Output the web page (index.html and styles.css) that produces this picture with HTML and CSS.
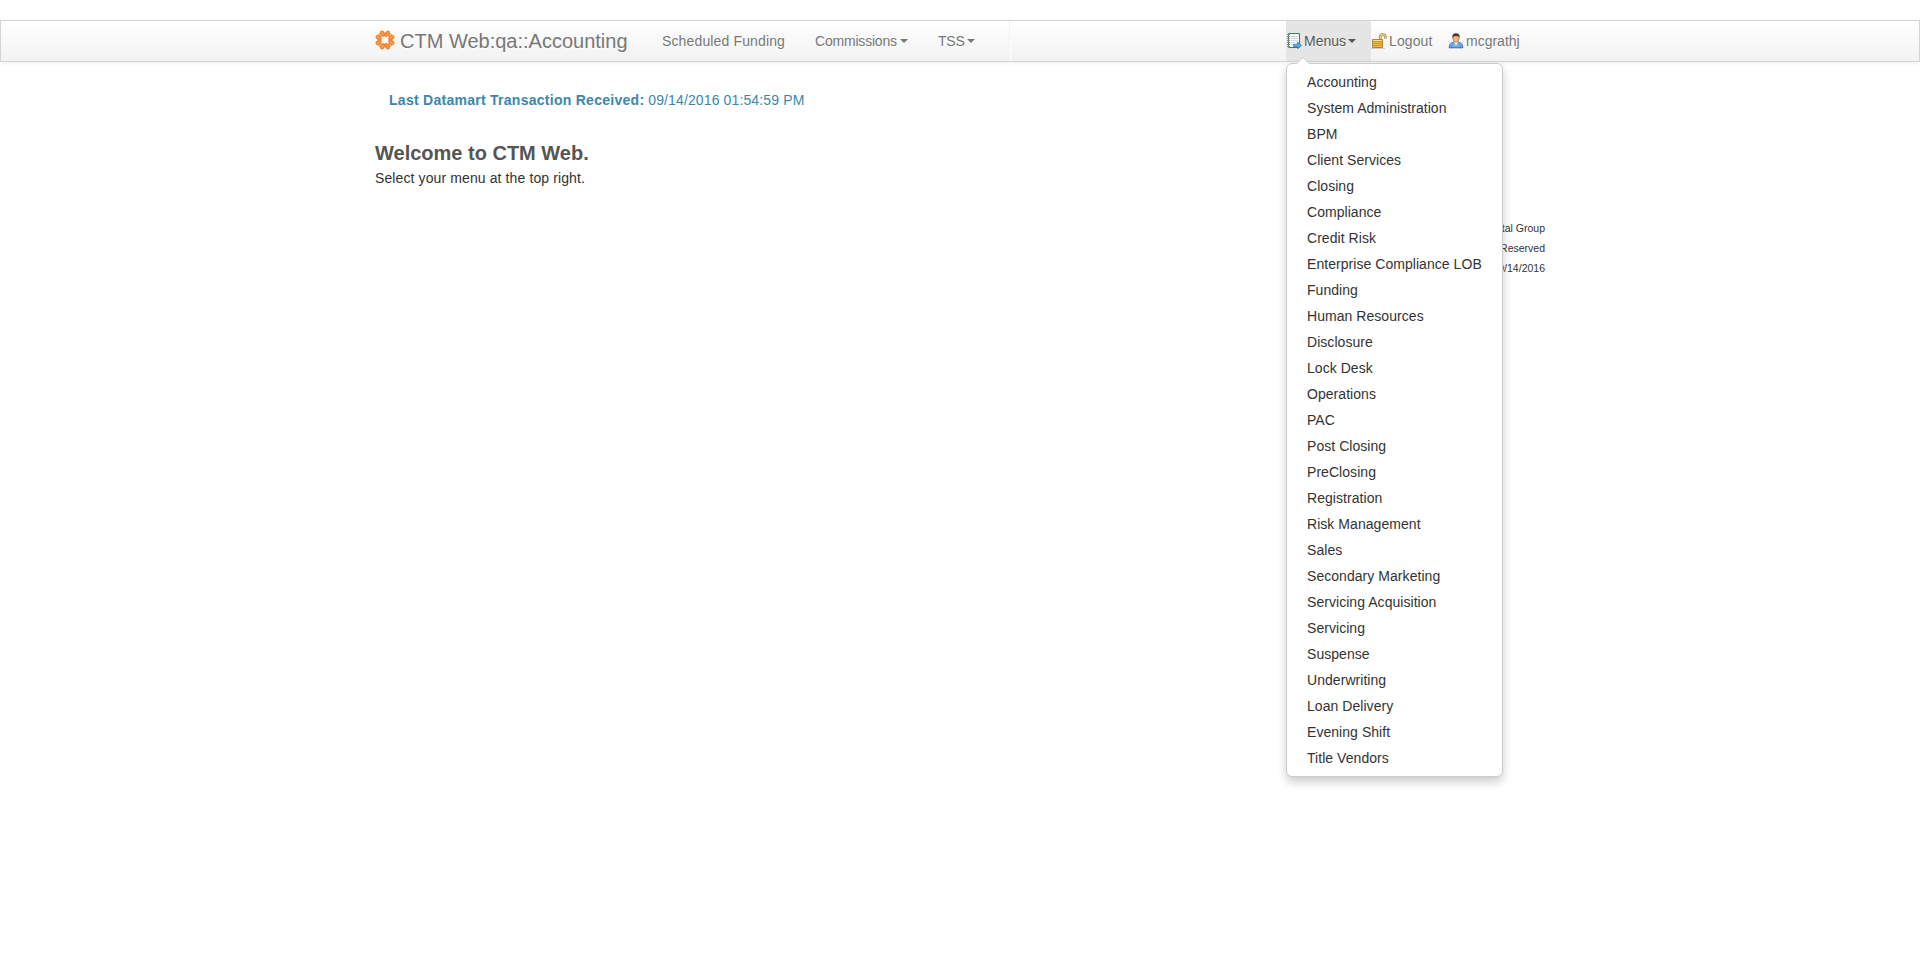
FILE: index.html
```html
<!DOCTYPE html>
<html lang="en">
<head>
<meta charset="utf-8">
<title>CTM Web</title>
<link rel="stylesheet" href="styles.css">
</head>
<body>
<header class="navbar">
  <div class="container navbar-row">
    <a class="brand">
      <svg class="brand-icon" width="20" height="20" viewBox="0 0 20 20" fill="none" stroke="#f08632" stroke-linecap="round">
        <path d="M7.2 3.4 3.4 7.2M12.8 3.4 16.6 7.2M7.2 16.6 3.4 12.8M12.8 16.6 16.6 12.8" stroke-width="3.8"/>
        <path d="M7 2.8 8.6 4.6M13 2.8 11.4 4.6M7 17.2 8.6 15.4M13 17.2 11.4 15.4M2.8 7 4.6 8.6M2.8 13 4.6 11.4M17.2 7 15.4 8.6M17.2 13 15.4 11.4" stroke-width="4.4"/>
        <path d="M6.3 2.6 8.2 4.5M13.7 2.6 11.8 4.5M2.6 6.3 4.5 8.2M2.6 13.7 4.5 11.8M17.4 6.3 15.5 8.2M17.4 13.7 15.5 11.8M6.3 17.4 8.2 15.5M13.7 17.4 11.8 15.5M4.2 4.2 6.4 6.4M15.8 4.2 13.6 6.4M4.2 15.8 6.4 13.6M15.8 15.8 13.6 13.6" stroke="#fbd0aa" stroke-width=".8"/>
      </svg>
      <span class="brand-text">CTM Web:qa::Accounting</span>
    </a>
    <nav class="nav">
      <a class="nav-link"><span class="w-sched">Scheduled Funding</span></a>
      <a class="nav-link"><span class="w-comm">Commissions</span><i class="caret"></i></a>
      <a class="nav-link"><span class="w-tss">TSS</span><i class="caret"></i></a>
      <i class="divider"></i>
    </nav>
    <nav class="nav nav-right">
      <div class="dropdown">
        <a class="nav-link icon-link open">
          <svg width="16" height="16" viewBox="0 0 16 16">
            <path d="M2.5.5h11v14h-11z" fill="#f6fafc" stroke="#3e8050"/>
            <path d="M5 3.5h7M5 5.5h7M5 7.5h7M5 9.5h4M5 11.5h2" stroke="#d3dbe2"/>
            <path d="M1 1.5h3M1 3.5h3M1 5.5h3M1 7.5h3M1 9.5h3M1 11.5h3M1 13.5h3" stroke="#889094"/>
            <path d="M7.5 11.4h4V9.2l4 3.3-4 3.2v-2.2h-4z" fill="#58b6ed" stroke="#2378b5" stroke-width=".8"/>
          </svg>
          <span class="w-menus">Menus</span><i class="caret"></i>
        </a>
        <ul class="dropdown-menu">
          <li>Accounting</li><li>System Administration</li><li>BPM</li><li>Client Services</li><li>Closing</li><li>Compliance</li><li>Credit Risk</li><li>Enterprise Compliance LOB</li><li>Funding</li><li>Human Resources</li><li>Disclosure</li><li>Lock Desk</li><li>Operations</li><li>PAC</li><li>Post Closing</li><li>PreClosing</li><li>Registration</li><li>Risk Management</li><li>Sales</li><li>Secondary Marketing</li><li>Servicing Acquisition</li><li>Servicing</li><li>Suspense</li><li>Underwriting</li><li>Loan Delivery</li><li>Evening Shift</li><li>Title Vendors</li>
        </ul>
      </div>
      <a class="nav-link icon-link">
        <svg width="16" height="16" viewBox="0 0 16 16">
          <path d="M9.2 7V4.2Q9.2 1.6 11.8 1.6T14.4 4.2V5.5" fill="none" stroke="#ad8740" stroke-width="2.8"/>
          <path d="M9.2 7V4.2Q9.2 1.6 11.8 1.6T14.4 4.2V5.1" fill="none" stroke="#ecd08a" stroke-width="1.2"/>
          <path d="M1.5 6.5h10v8h-10z" fill="#eab94d" stroke="#b58428"/>
          <path d="M2 8.5H11M2 10.5H11M2 12.5H11" stroke="#c99737"/>
          <path d="M2 7.5h9" stroke="#fae29b"/><path d="M0 15.5h14" stroke="#ccc"/>
        </svg>
        <span class="w-logout">Logout</span>
      </a>
      <a class="nav-link icon-link">
        <svg width="16" height="16" viewBox="0 0 16 16">
          <path d="M1 14.5Q1 10 5 9.3L8 11l3-1.7q4 .7 4 5.2z" fill="#78aeea" stroke="#4a7fc2"/>
          <path d="M6 9.2 8 12.5l2-3.3z" fill="#fff"/>
          <ellipse cx="8" cy="5.3" rx="3.2" ry="4" fill="#edb88c" stroke="#a87047" stroke-width=".8"/>
          <path d="M4.3 5Q3.8.2 8 .2T11.7 5L10.7 3.2H5.8z" fill="#4c382f"/>
          <path d="M4 12v2.5M12 12v2.5" stroke="#497fc0"/><path d="M1 15.5h14" stroke="#ccc"/>
        </svg>
        <span class="w-user">mcgrathj</span>
      </a>
    </nav>
  </div>
</header>
<main class="container">
  <p class="notice"><b>Last Datamart Transaction Received:</b> <span>09/14/2016 01:54:59 PM</span></p>
  <h1 class="title">Welcome to CTM Web.</h1>
  <p class="lead">Select your menu at the top right.</p>
  <footer class="footer">
    <div>Capital Group</div>
    <div>All Rights Reserved</div>
    <div>09/14/2016</div>
  </footer>
</main>
</body>
</html>
```
FILE: styles.css
```css
* { box-sizing: border-box; }
body {
  margin: 0;
  min-height: 100vh;
  padding-top: 20px;
  font: 14px/20px "Liberation Sans", Arial, sans-serif;
  color: #333;
  background: #fff;
}
.container { width: 1170px; margin: 0 auto; }
.navbar {
  height: 42px;
  border: 1px solid #d4d4d4;
  background: linear-gradient(#fff, #f2f2f2);
  box-shadow: 0 1px 4px rgba(0, 0, 0, .065);
}
.navbar-row { display: flex; height: 40px; }
.brand {
  display: flex;
  width: 272px;
  padding-top: 9px;
  gap: 5px;
  font-size: 20px;
  color: #777;
  text-shadow: 0 1px 0 #fff;
}
.brand-text { padding-top: 1px; white-space: nowrap; }
.nav { display: flex; }
.nav-right { margin: 0 10px 0 auto; }
.nav-link {
  display: flex;
  height: 40px;
  padding: 10px 15px;
  color: #777;
  text-shadow: 0 1px 0 #fff;
  white-space: nowrap;
}
.icon-link { padding-left: 0; }
.icon-link svg { margin: 2px 2px 0 0; flex: none; }
.w-sched { width: 123px; letter-spacing: .14px; }
.w-comm { width: 82px; letter-spacing: -.2px; }
.w-tss { width: 26px; letter-spacing: -.2px; }
.w-menus { width: 41px; }
.w-logout { width: 44px; letter-spacing: .12px; }
.w-user { width: 54px; }
.open { background: #e5e5e5; color: #555; }
.caret {
  width: 8px;
  height: 4px;
  margin: 8px 0 0 3px;
  border: 4px solid transparent;
  border-top-color: currentColor;
  border-bottom: 0;
}
.divider {
  width: 2px;
  height: 40px;
  margin-left: 19px;
  border-left: 1px solid #f2f2f2;
  border-right: 1px solid #fff;
}
.dropdown { position: relative; }
.dropdown-menu {
  position: absolute;
  z-index: 10;
  top: 42px;
  left: 0;
  width: 217px;
  margin: 0;
  padding: 5px 0;
  list-style: none;
  background: #fff;
  border: 1px solid #ccc;
  border-radius: 6px;
  box-shadow: 0 5px 10px rgba(0, 0, 0, .2);
}
.dropdown-menu::before,
.dropdown-menu::after {
  content: "";
  position: absolute;
  border: solid transparent;
  border-top: 0;
}
.dropdown-menu::before {
  top: -7px;
  left: 9px;
  border-width: 0 7px 7px;
  border-bottom-color: #ccc;
}
.dropdown-menu::after {
  top: -6px;
  left: 10px;
  border-width: 0 6px 6px;
  border-bottom-color: #fff;
}
.dropdown-menu li { padding: 3px 20px; letter-spacing: .05px; white-space: nowrap; }
.notice { margin: 28px 0 0 14px; color: #3a87ad; }
.notice b { letter-spacing: .27px; }
.notice span { letter-spacing: .13px; }
.title { margin: 33px 0 0; font-size: 20px; line-height: 20px; color: #555; }
.lead { margin: 5px 0 0; letter-spacing: .11px; }
.footer {
  margin-top: 30px;
  font-size: 10.5px;
  line-height: 20px;
  text-align: right;
}
```
